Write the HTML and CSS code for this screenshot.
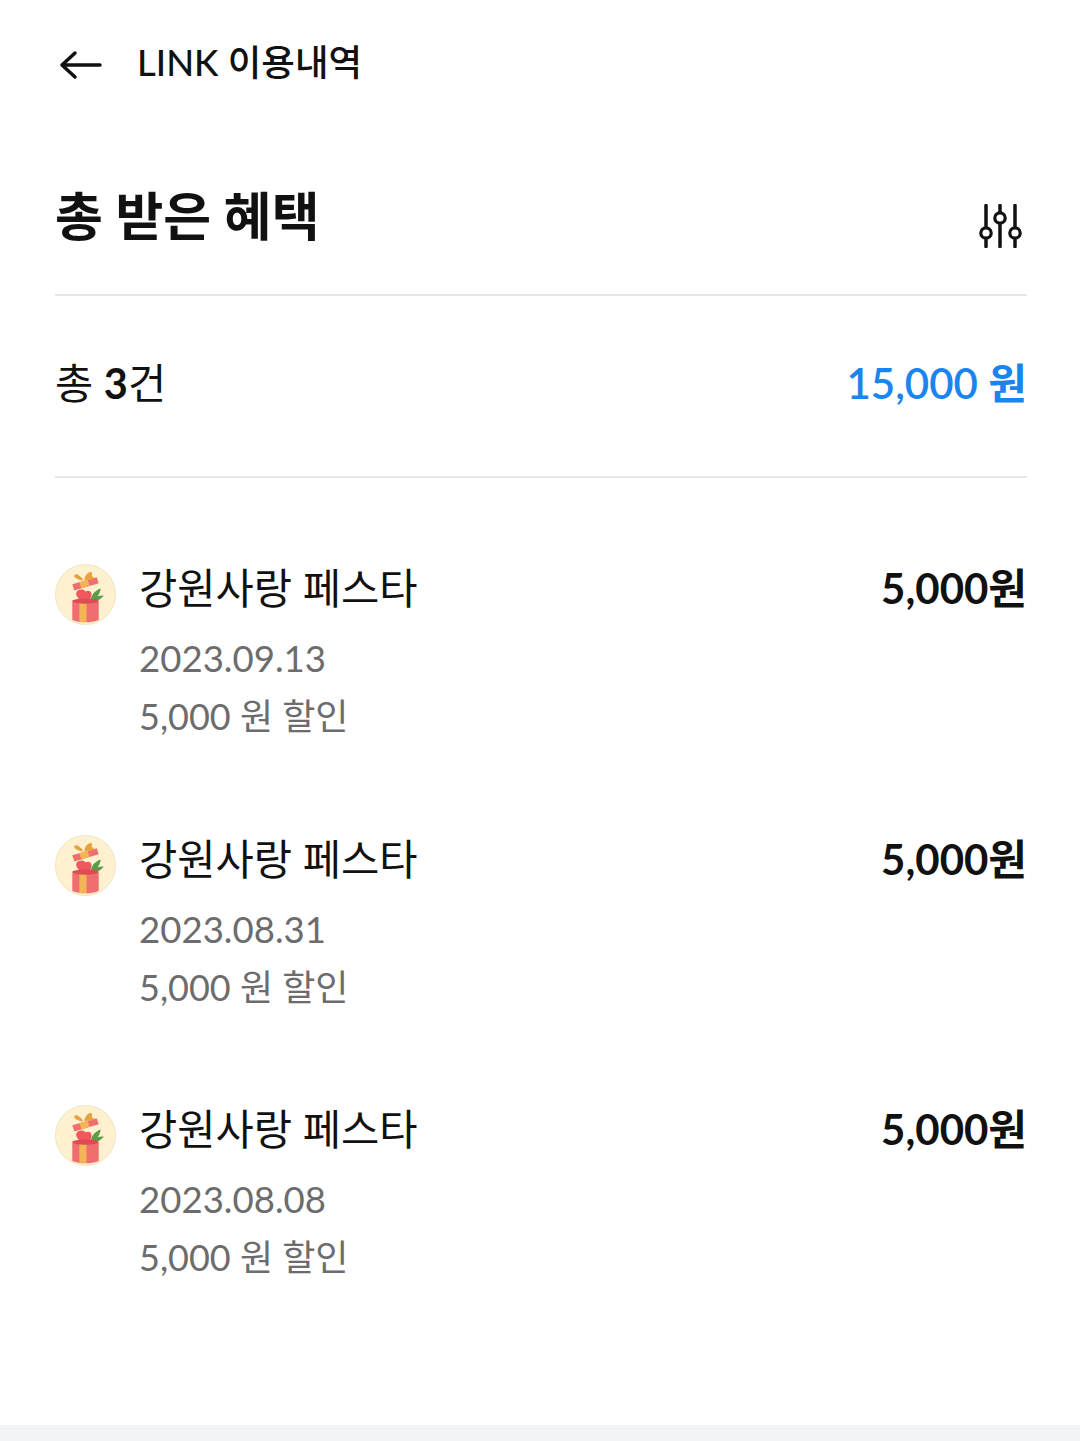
FILE: index.html
```html
<!DOCTYPE html>
<html lang="ko">
<head>
    <meta charset="UTF-8">
    <meta name="viewport" content="width=device-width, initial-scale=1.0">
    <title>LINK 이용내역</title>
    <link rel="stylesheet" href="styles.css">
</head>
<body>
    <svg class="defs" width="0" height="0">
        <symbol id="gift" viewBox="0 0 60 60">
            <circle cx="30" cy="30" r="29.5" fill="#fdf1cf" stroke="#f0e6c6" stroke-width="1"/>
            <path d="M17 20l24-7 2 6-24 7z" fill="#ef6f70"/>
            <path d="M24 18l8-2.500 2 6-8 2.500z" fill="#f5b455"/>
            <path d="M28 16c-4-6-8-7-9-5s4 5 9 5zM29 16c0-5 4-9 7-8 2 3-2 7-7 8zM30 15c3-3 7-4 8-2 0 3-4 3-8 2z" fill="#e9a03f"/>
            <path d="M29 38c-6-3-9-7-8-10s7-4 9-1c3-2 6 0 6 3 0 4-3 7-7 8z" fill="#f0575f"/>
            <path d="M35 36c1-6 4-10 10-12-1 6-4 10-10 12zM36 36c3-4 7-5 12-5-3 4-7 6-12 5z" fill="#5a9c48"/>
            <path d="M17 37c7 2 19 2 26 0v18c-7 3-19 3-26 0z" fill="#ef6f70"/>
            <path d="M24 38h7v19h-7z" fill="#f5b455"/>
            <ellipse cx="30" cy="36.500" rx="13" ry="2.500" fill="#dd4b55"/>
        </symbol>
    </svg>
    <header class="top-bar">
        <svg class="back-icon" viewBox="0 0 44 30" width="44" height="30">
            <path d="M3 15h38M16 3L3 15l13 12" fill="none" stroke="#111" stroke-width="3.500" stroke-linecap="round" stroke-linejoin="round"/>
        </svg>
        <span class="top-title">LINK 이용내역</span>
    </header>
    <section class="title-row">
        <h1>총 받은 혜택</h1>
        <svg class="filter-icon" viewBox="0 0 44 44" width="44" height="44">
            <path d="M7 1.500v21M7 36v6.500M21 1.500v6M21 21v21.500M36 1.500v21M36 36v6.500" stroke="#111" stroke-width="3.500" stroke-linecap="round"/>
            <circle cx="7" cy="29" r="5.200" fill="none" stroke="#111" stroke-width="3.200"/>
            <circle cx="21" cy="14" r="5.200" fill="none" stroke="#111" stroke-width="3.200"/>
            <circle cx="36" cy="29" r="5.200" fill="none" stroke="#111" stroke-width="3.200"/>
        </svg>
    </section>
    <section class="summary">
        <span class="count">총 <b>3</b>건</span>
        <span class="total">15,000 원</span>
    </section>
    <ul class="list">
        <li class="item">
            <svg class="thumb" width="61" height="61"><use href="#gift"/></svg>
            <div class="info">
                <div class="name">강원사랑 페스타</div>
                <div class="date">2023.09.13</div>
                <div class="note">5,000 원 할인</div>
            </div>
            <div class="price">5,000원</div>
        </li>
        <li class="item">
            <svg class="thumb" width="61" height="61"><use href="#gift"/></svg>
            <div class="info">
                <div class="name">강원사랑 페스타</div>
                <div class="date">2023.08.31</div>
                <div class="note">5,000 원 할인</div>
            </div>
            <div class="price">5,000원</div>
        </li>
        <li class="item">
            <svg class="thumb" width="61" height="61"><use href="#gift"/></svg>
            <div class="info">
                <div class="name">강원사랑 페스타</div>
                <div class="date">2023.08.08</div>
                <div class="note">5,000 원 할인</div>
            </div>
            <div class="price">5,000원</div>
        </li>
    </ul>
    <div class="bottom-band"></div>
</body>
</html>
```

FILE: styles.css
```css
* {
    box-sizing: border-box;
}
html, body {
    margin: 0;
    padding: 0;
}
body {
    width: 1080px;
    height: 1441px;
    display: flex;
    flex-direction: column;
    background: #fff;
    color: #111;
    font-family: Lato, "Noto Sans CJK KR", sans-serif;
    overflow: hidden;
}
.defs {
    position: absolute;
}
.top-bar {
    display: flex;
    align-items: flex-start;
    gap: 34px;
    height: 124px;
    padding: 38px 0 0 59px;
}
.back-icon {
    margin-top: 12px;
}
.top-title {
    font-size: 36.500px;
    font-weight: 500;
    line-height: 48px;
}
.title-row {
    display: flex;
    justify-content: space-between;
    align-items: flex-start;
    height: 172px;
    padding-top: 57px;
    margin: 0 53px 0 55px;
    border-bottom: 2px solid #e6e6e6;
}
.title-row h1 {
    margin: 0;
    font-size: 52px;
    font-weight: 700;
    line-height: 70px;
}
.filter-icon {
    margin: 23px 4px 0 0;
}
.summary {
    display: flex;
    justify-content: space-between;
    align-items: flex-start;
    height: 182px;
    padding-top: 62px;
    margin: 0 53px 0 55px;
    border-bottom: 2px solid #e6e6e6;
}
.count {
    font-size: 41.500px;
    line-height: 50px;
}
.count b {
    font-weight: 700;
}
.total {
    font-size: 42px;
    font-weight: 600;
    line-height: 50px;
    color: #1a85ee;
}
.list {
    list-style: none;
    margin: 0;
    padding: 0;
    flex: 1;
}
.item {
    display: flex;
    align-items: flex-start;
    height: 270.500px;
    padding: 85px 53px 0 55px;
}
.thumb {
    flex: none;
    margin: 1px 24px 0 0;
}
.info {
    flex: 1;
    margin-left: -1px;
}
.name {
    font-size: 41.600px;
    line-height: 50px;
    margin-bottom: 17px;
}
.date {
    font-size: 36.600px;
    line-height: 57px;
    color: #6c6c6c;
}
.note {
    font-size: 36px;
    line-height: 57px;
    padding-top: 1px;
    color: #6c6c6c;
}
.price {
    font-size: 42px;
    font-weight: 700;
    line-height: 50px;
}
.bottom-band {
    height: 16px;
    background: #f3f4f8;
}
```
